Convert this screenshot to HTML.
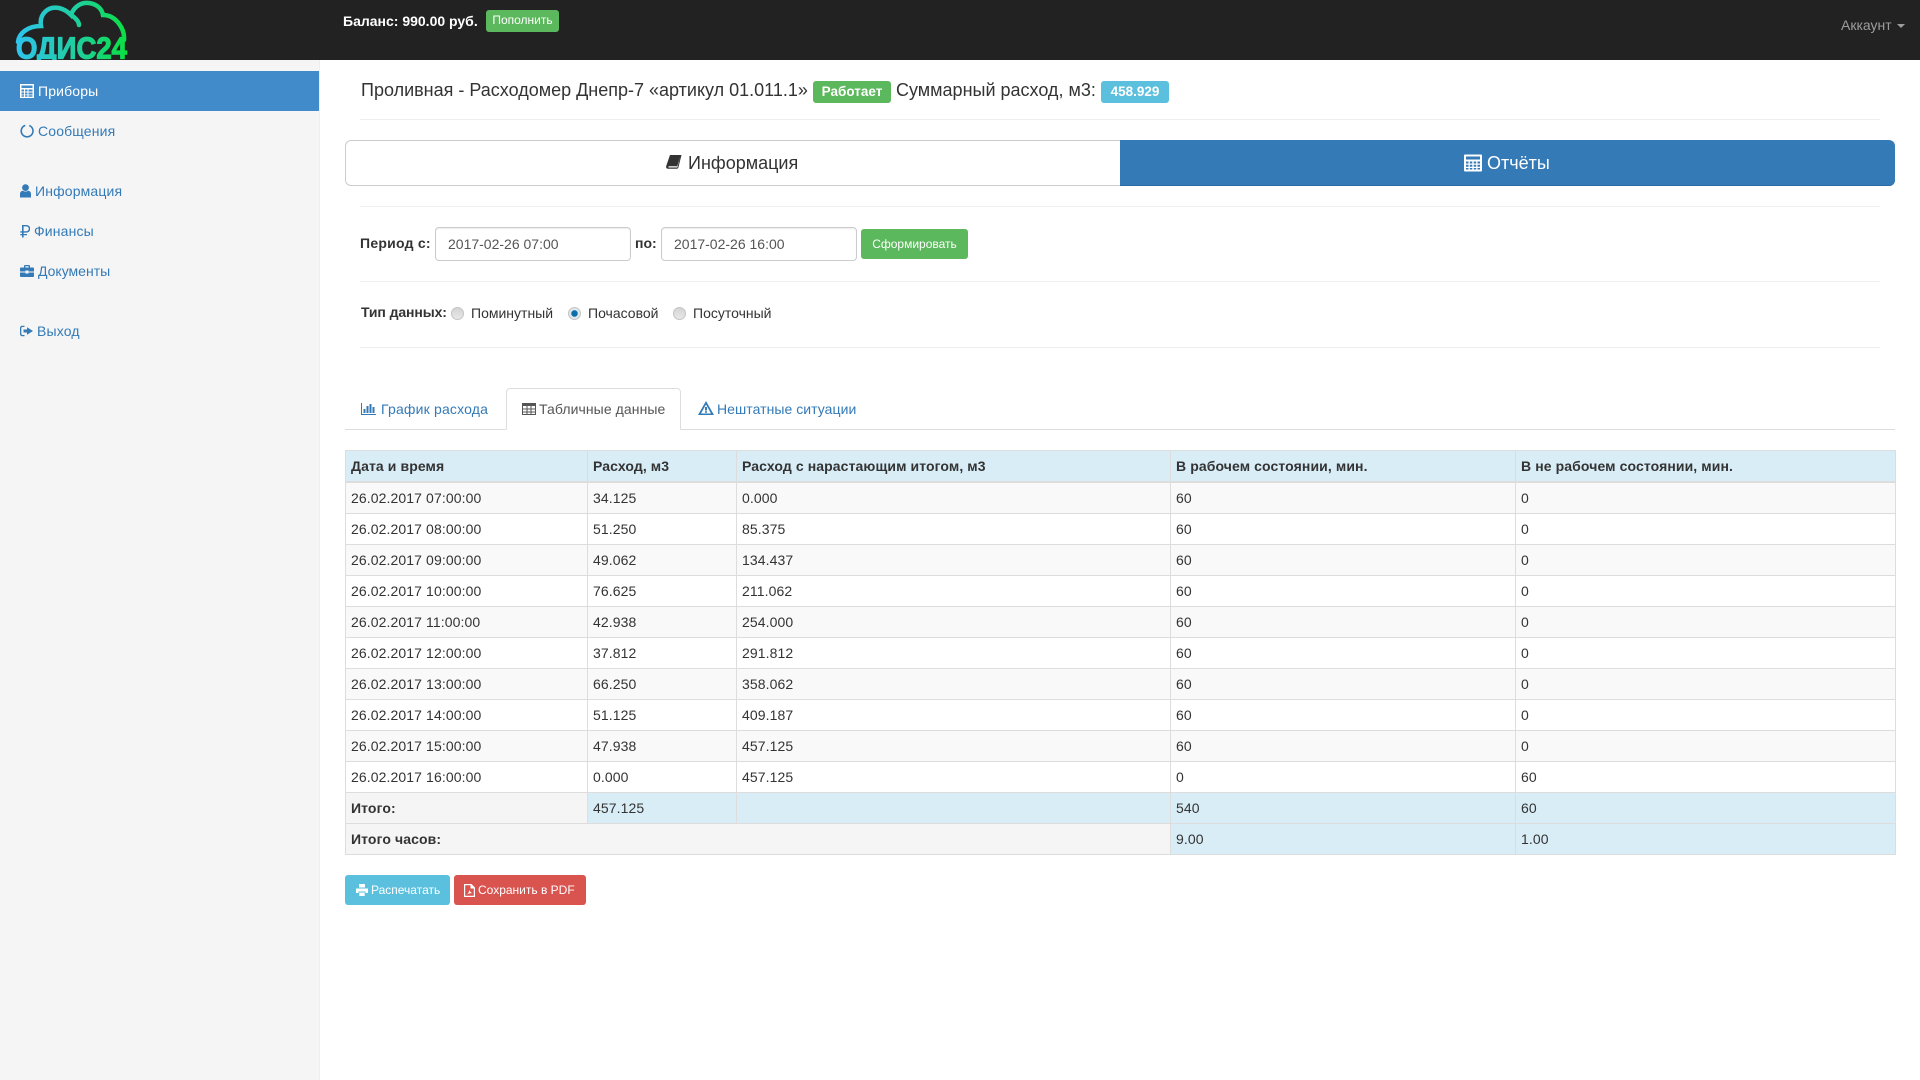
<!DOCTYPE html>
<html lang="ru"><head><meta charset="utf-8"><title>Одис24</title>
<style>
html,body{margin:0;padding:0;width:1920px;height:1080px;overflow:hidden;background:#fff}
body{font-family:"Liberation Sans","Noto Sans CJK SC",sans-serif;font-size:14px;color:#333;position:relative}
.a{position:absolute;white-space:nowrap}
.nav{left:0;top:0;width:1920px;height:60px;background:#222}
.side{left:0;top:60px;width:319px;height:1020px;background:#f5f5f5;border-right:1px solid #eee}
.item{left:0;width:319px;height:40px;line-height:40px;color:#337ab7;letter-spacing:.15px}
.item svg{position:absolute;left:20px;top:13px;fill:#337ab7}
.item span{position:absolute}
.hr{left:360px;width:1520px;height:1px;background:#eee}
.lab{color:#fff;font-weight:bold;font-size:13.5px;border-radius:3px;height:22px;line-height:21px;text-align:center}
.inp{border:1px solid #ccc;border-radius:4px;height:32px;line-height:32px;width:182px;color:#555;padding-left:12px;box-sizing:content-box;box-shadow:inset 0 1px 1px rgba(0,0,0,.075)}
.r{width:11px;height:11px;border-radius:50%;border:1px solid #c4c4c4;background:linear-gradient(#d4d4d4,#e8e8e8)}
table{border-collapse:collapse;table-layout:fixed;position:absolute;left:345px;top:450px;width:1550px;letter-spacing:.1px}
td,th{border:1px solid #ddd;padding:0 0 0 5px;height:30px;line-height:20px;font-size:14px;text-align:left;vertical-align:middle;white-space:nowrap;overflow:hidden}
th{background:#d9edf7;border-bottom:2px solid #ddd;height:30px}
tr.o td{background:#f9f9f9}
td.g{background:#f5f5f5;font-weight:bold}
td.b{background:#d9edf7}
.btn{color:#fff;font-size:12px;border-radius:3px;height:30px;line-height:30px}
.btn svg{position:absolute;fill:#fff}
</style></head><body>

<div class="a nav"></div>
<svg class="a" style="left:0;top:0" width="160" height="60" viewBox="0 0 160 60">
<defs><linearGradient id="g" gradientUnits="userSpaceOnUse" x1="15" y1="0" x2="128" y2="0"><stop offset="0" stop-color="#2ec4f0"/><stop offset=".55" stop-color="#1fcf9d"/><stop offset="1" stop-color="#0ae040"/></linearGradient></defs>
<path d="M18 42C19 33 28 26 41 26C39 14 48 6 59 8C64 9 68 12 71 15C74 6 82 2 89 3C97 4 102 9 103 15C116 15 125 29 124 40M71 15C76 18 79 22 79 25" fill="none" stroke="url(#g)" stroke-width="4.500" stroke-linecap="round"/>
<text x="16" y="58.500" font-size="31" font-weight="bold" fill="url(#g)" stroke="url(#g)" stroke-width="1.200" textLength="111" lengthAdjust="spacingAndGlyphs" style="font-family:'Liberation Sans',sans-serif">ОДИС24</text>
</svg>
<div class="a" style="left:343px;top:13px;line-height:16px;font-weight:bold;color:#fff;font-size:14px">Баланс: 990.00 руб.</div>
<div class="a" style="left:486px;top:10px;width:73px;height:22px;line-height:21px;background:#5cb85c;border-radius:3px;color:#fff;font-size:12px;text-align:center">Пополнить</div>
<div class="a" style="left:1841px;top:17px;line-height:16px;color:#9d9d9d;font-size:14px">Аккаунт</div>
<div class="a" style="left:1897px;top:24px;width:0;height:0;border-top:4px solid #9d9d9d;border-left:4px solid transparent;border-right:4px solid transparent"></div>

<div class="a side"></div>
<div class="a item" style="top:71px;background:#428bca;color:#fff"><svg width="14" height="14" viewBox="0 0 14 14" style="fill:#fff"><path d="M0 0h14v14H0zM1.500 1.500v2.500h11V1.500zM1.500 5.500v2h2.500v-2zM5 5.500v2h2.500v-2zM8.500 5.500v2h4v-2zM1.500 8.500v2h2.500v-2zM5 8.500v2h2.500v-2zM8.500 8.500v2h4v-2zM1.500 11.200v1.500h2.500v-1.500zM5 11.200v1.500h2.500v-1.500zM8.500 11.200v1.500h4v-1.500z" fill-rule="evenodd"/></svg><span style="left:38px">Приборы</span></div>
<div class="a item" style="top:111px"><svg width="14" height="14" viewBox="0 0 14 14"><path d="M5 .6A6.700 6.700 0 1 0 9.500.7L9 2.200A5.100 5.100 0 1 1 5.500 2.100z"/></svg><span style="left:38px">Сообщения</span></div>
<div class="a item" style="top:171px"><svg width="11" height="14" viewBox="0 0 11 14"><circle cx="5.500" cy="3.600" r="3.400"/><path d="M0 13.500V10C0 8 1.500 6.800 3 6.800c1.500 1 3.500 1 5 0C9.500 6.800 11 8 11 10v3.500z"/></svg><span style="left:35px">Информация</span></div>
<div class="a item" style="top:211px"><svg width="10" height="14" viewBox="0 0 10 14"><path d="M2 1h4.500a3.800 3.800 0 0 1 0 7.600H3.600V10H7v1.300H3.600V13.500H2V11.300H.3V10H2V8.600H.3V7.200H2zM3.600 2.400v4.800h2.800a2.400 2.400 0 0 0 0-4.800z" fill-rule="evenodd"/></svg><span style="left:34px">Финансы</span></div>
<div class="a item" style="top:251px"><svg width="14" height="14" viewBox="0 0 14 14"><path d="M0 4.500Q0 3.500 1 3.500h3V2q0-1 1-1h4q1 0 1 1v1.500h3q1 0 1 1V7.500H8.500v-1h-3v1H0zM5.300 2.300v1.200h3.400V2.300zM0 8.500h5.500v1h3v-1H14V12q0 1-1 1H1q-1 0-1-1z" fill-rule="evenodd"/></svg><span style="left:38px;letter-spacing:0">Документы</span></div>
<div class="a item" style="top:311px"><svg width="13" height="14" viewBox="0 0 13 14"><path d="M4.500 3H2.500Q1.300 3 1.300 4.200V9.800Q1.300 11 2.500 11H4.500V12.300H2.500Q0 12.300 0 9.800V4.200Q0 1.700 2.500 1.700H4.500zM7 3.300L13 7 7 10.700V8.500H3.500V5.500H7z"/></svg><span style="left:37px">Выход</span></div>

<div class="a" style="left:361px;top:80px;font-size:18px;line-height:20px;color:#333">Проливная - Расходомер Днепр-7 «артикул 01.011.1»</div>
<div class="a lab" style="left:813px;top:81px;width:78px;background:#5cb85c">Работает</div>
<div class="a" style="left:896px;top:80px;font-size:18px;line-height:20px;color:#333">Суммарный расход, м3:</div>
<div class="a lab" style="left:1101px;top:81px;width:68px;background:#5bc0de">458.929</div>
<div class="a hr" style="top:119px"></div>

<div class="a" style="left:345px;top:140px;width:774px;height:44px;border:1px solid #ccc;border-right:none;border-radius:6px 0 0 6px;background:#fff"></div>
<div class="a" style="left:1120px;top:140px;width:775px;height:46px;background:#337ab7;border-radius:0 6px 6px 0;box-shadow:inset 0 -1px 0 #2e6da4"></div>
<svg class="a" style="left:666px;top:154px" width="16" height="16" viewBox="0 0 16 15" fill="#333"><path d="M4 .5h11.500L12.500 12.500Q12.300 14.300 10.500 14.300H2Q-.3 14.300.2 11.500zM3.300 11.700Q2.400 11.700 2.300 12.400 2.300 13 3 13H11Q11.500 13 11.600 12.400L14 2.500 11.300 11.700z" fill-rule="evenodd"/></svg>
<div class="a" style="left:688px;top:153px;font-size:18px;line-height:20px;color:#333">Информация</div>
<svg class="a" style="left:1464px;top:154px" width="18" height="18" viewBox="0 0 18 17" fill="#fff"><path d="M1 0h16q1 0 1 1v15q0 1-1 1H1q-1 0-1-1V1q0-1 1-1zM2 2v3h14V2zM2 7v2h2.500V7zM5.800 7v2h2.500V7zM9.700 7v2h2.500V7zM13.500 7v2H16V7zM2 10.300v2h2.500v-2zM5.800 10.300v2h2.500v-2zM9.700 10.300v2h2.500v-2zM13.500 10.300v2H16v-2zM2 13.500V15h2.500v-1.500zM5.800 13.500V15h2.500v-1.500zM9.700 13.500V15h2.500v-1.500zM13.500 13.500V15H16v-1.500z" fill-rule="evenodd"/></svg>
<div class="a" style="left:1487px;top:153px;font-size:18px;line-height:20px;color:#fff">Отчёты</div>
<div class="a hr" style="top:206px"></div>

<div class="a" style="left:360px;top:235px;font-weight:bold;line-height:16px;letter-spacing:.25px">Период с:</div>
<div class="a inp" style="left:435px;top:227px">2017-02-26 07:00</div>
<div class="a" style="left:635px;top:235px;font-weight:bold;line-height:16px">по:</div>
<div class="a inp" style="left:661px;top:227px">2017-02-26 16:00</div>
<div class="a btn" style="left:861px;top:229px;width:107px;background:#5cb85c;text-align:center">Сформировать</div>
<div class="a hr" style="top:281px"></div>

<div class="a" style="left:361px;top:304px;font-weight:bold;line-height:16px;letter-spacing:-.1px">Тип данных:</div>
<div class="a r" style="left:451px;top:307px"></div>
<div class="a" style="left:471px;top:305px;line-height:16px">Поминутный</div>
<div class="a r" style="left:567.500px;top:307px;background:radial-gradient(circle,#0b6ea8 0 3px,#dfe6ea 3.500px)"></div>
<div class="a" style="left:588px;top:305px;line-height:16px">Почасовой</div>
<div class="a r" style="left:673px;top:307px"></div>
<div class="a" style="left:693px;top:305px;line-height:16px">Посуточный</div>
<div class="a hr" style="top:347px"></div>

<div class="a" style="left:345px;top:429px;width:1550px;height:1px;background:#ddd"></div>
<svg class="a" style="left:361px;top:403px" width="15" height="12" viewBox="0 0 15 12" fill="#337ab7"><path d="M0 0h1v11h14v1H0zM2.500 6h2v4h-2zM5.500 3h2v7h-2zM8.500 1h2v9h-2zM11.500 4h2v6h-2z"/></svg>
<div class="a" style="left:381px;top:401px;line-height:16px;color:#337ab7;letter-spacing:.18px">График расхода</div>
<div class="a" style="left:506px;top:388px;width:175px;height:42px;box-sizing:border-box;background:#fff;border:1px solid #ddd;border-bottom:1px solid #fff;border-radius:4px 4px 0 0"></div>
<svg class="a" style="left:522px;top:403px" width="14" height="12" viewBox="0 0 14 12" fill="#555"><path d="M0 0h14v12H0zM1 3v2.500h3.500V3zM5.500 3v2.500h3V3zM9.500 3v2.500H13V3zM1 6.500V8.500h3.500V6.500zM5.500 6.500V8.500h3V6.500zM9.500 6.500V8.500H13V6.500zM1 9.500V11h3.500V9.500zM5.500 9.500V11h3V9.500zM9.500 9.500V11H13V9.500z" fill-rule="evenodd"/></svg>
<div class="a" style="left:539px;top:401px;line-height:16px;color:#555;letter-spacing:.08px">Табличные данные</div>
<svg class="a" style="left:698px;top:401px" width="16" height="14" viewBox="0 0 16 14" fill="#337ab7"><path d="M8 0L16 14H0zM8 3.500L3 12.500H13zM7 6h2v3.500H7zM7 10.300h2v1.500H7z" fill-rule="evenodd"/></svg>
<div class="a" style="left:717px;top:401px;line-height:16px;color:#337ab7;letter-spacing:.05px">Нештатные ситуации</div>

<table>
<colgroup><col style="width:242px"><col style="width:149px"><col style="width:434px"><col style="width:345px"><col style="width:380px"></colgroup>
<tr><th>Дата и время</th><th>Расход, м3</th><th>Расход с нарастающим итогом, м3</th><th>В рабочем состоянии, мин.</th><th>В не рабочем состоянии, мин.</th></tr>
<tr class="o"><td>26.02.2017 07:00:00</td><td>34.125</td><td>0.000</td><td>60</td><td>0</td></tr>
<tr><td>26.02.2017 08:00:00</td><td>51.250</td><td>85.375</td><td>60</td><td>0</td></tr>
<tr class="o"><td>26.02.2017 09:00:00</td><td>49.062</td><td>134.437</td><td>60</td><td>0</td></tr>
<tr><td>26.02.2017 10:00:00</td><td>76.625</td><td>211.062</td><td>60</td><td>0</td></tr>
<tr class="o"><td>26.02.2017 11:00:00</td><td>42.938</td><td>254.000</td><td>60</td><td>0</td></tr>
<tr><td>26.02.2017 12:00:00</td><td>37.812</td><td>291.812</td><td>60</td><td>0</td></tr>
<tr class="o"><td>26.02.2017 13:00:00</td><td>66.250</td><td>358.062</td><td>60</td><td>0</td></tr>
<tr><td>26.02.2017 14:00:00</td><td>51.125</td><td>409.187</td><td>60</td><td>0</td></tr>
<tr class="o"><td>26.02.2017 15:00:00</td><td>47.938</td><td>457.125</td><td>60</td><td>0</td></tr>
<tr><td>26.02.2017 16:00:00</td><td>0.000</td><td>457.125</td><td>0</td><td>60</td></tr>
<tr><td class="g">Итого:</td><td class="b">457.125</td><td class="b"></td><td class="b">540</td><td class="b">60</td></tr>
<tr><td class="g" colspan="3">Итого часов:</td><td class="b">9.00</td><td class="b">1.00</td></tr>
</table>

<div class="a btn" style="left:345px;top:875px;width:105px;background:#5bc0de"><svg style="left:11px;top:9px" width="12" height="12" viewBox="0 0 12 12"><path d="M3 0h6v3.500H3zM0 4.500h12V9h-2.500V7.500h-7V9H0zM3.300 8.500h5.400V12H3.300z"/></svg><span class="a" style="left:26px">Распечатать</span></div>
<div class="a btn" style="left:454px;top:875px;width:132px;background:#d9534f"><svg style="left:10px;top:9px" width="11" height="13" viewBox="0 0 11 13"><path d="M0 0h7.500L11 3.500V13H0zM1.200 1.200v10.600h8.600V4.500H6.500V1.200zM3 10.500Q5 9 5.300 5.800 6 8.500 8.500 9 5.500 9 3 10.500z" fill-rule="evenodd"/></svg><span class="a" style="left:24px">Сохранить в PDF</span></div>
</body></html>
